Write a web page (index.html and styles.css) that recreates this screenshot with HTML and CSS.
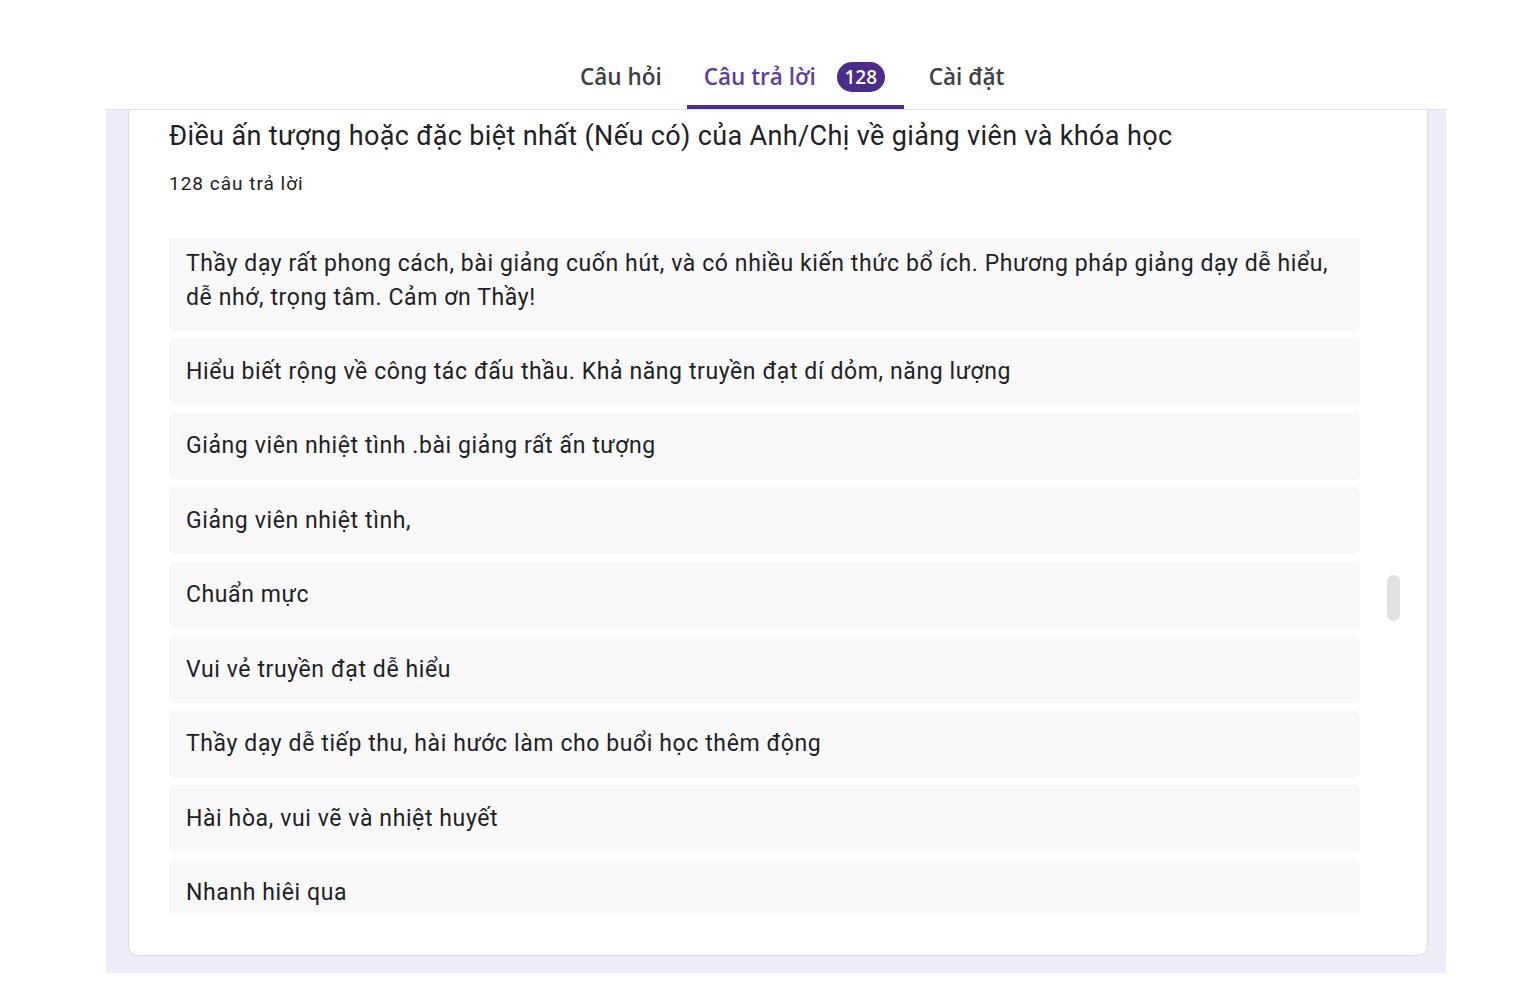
FILE: index.html
```html
<!DOCTYPE html>
<html lang="vi">
<head>
<meta charset="utf-8">
<title>Câu trả lời</title>
<link rel="stylesheet" href="styles.css">
</head>
<body>
<div class="page">
  <header class="tabbar">
    <nav class="tabs">
      <div class="tab">Câu hỏi</div>
      <div class="tab tab-active">Câu trả lời <span class="badge">128</span></div>
      <div class="tab">Cài đặt</div>
    </nav>
  </header>
  <main class="canvas">
    <section class="card">
      <h2 class="q-title">Điều ấn tượng hoặc đặc biệt nhất (Nếu có) của Anh/Chị về giảng viên và khóa học</h2>
      <div class="q-count">128 câu trả lời</div>
      <div class="answers">
        <div class="answers-viewport">
          <div class="answers-list">
            <div class="answer">Thầy dạy rất phong cách, bài giảng cuốn hút, và có nhiều kiến thức bổ ích. Phương pháp giảng dạy dễ hiểu, dễ nhớ, trọng tâm. Cảm ơn Thầy!</div>
            <div class="answer">Hiểu biết rộng về công tác đấu thầu. Khả năng truyền đạt dí dỏm, năng lượng</div>
            <div class="answer">Giảng viên nhiệt tình .bài giảng rất ấn tượng</div>
            <div class="answer">Giảng viên nhiệt tình,</div>
            <div class="answer">Chuẩn mực</div>
            <div class="answer">Vui vẻ truyền đạt dễ hiểu</div>
            <div class="answer">Thầy dạy dễ tiếp thu, hài hước làm cho buổi học thêm động</div>
            <div class="answer">Hài hòa, vui vẽ và nhiệt huyết</div>
            <div class="answer">Nhanh hiêi qua</div>
          </div>
        </div>
        <div class="scroll-track"><div class="scroll-thumb"></div></div>
      </div>
    </section>
  </main>
</div>
</body>
</html>
```

FILE: styles.css
```css
html, body {
  margin: 0;
  padding: 0;
  background: #ffffff;
}
body {
  font-family: Roboto, "Liberation Sans", Arial, sans-serif;
  color: #202124;
}
.page {
  width: 1340px;
  margin-left: 106px;
}
.tabbar {
  height: 109px;
  border-bottom: 1px solid #e0e0e0;
  display: flex;
  align-items: flex-end;
}
.tabs {
  display: flex;
  gap: 8px;
  margin-left: 457px;
}
.tab {
  font-family: "Open Sans", Roboto, sans-serif;
  font-size: 22.5px;
  font-weight: 600;
  color: #3c4043;
  height: 59px;
  padding: 0 17px;
  box-sizing: border-box;
  display: flex;
  align-items: center;
  gap: 21px;
  border-bottom: 4px solid transparent;
  padding-bottom: 2px;
  letter-spacing: 0;
}
.tab-active {
  color: #5e3ea6;
  border-bottom-color: #4b2c8a;
  border-radius: 4px 4px 0 0;
  padding-right: 19px;
}
.badge {
  background: #4b2c8a;
  color: #ffffff;
  font-size: 19px;
  font-weight: 600;
  height: 30px;
  min-width: 48px;
  border-radius: 15px;
  display: inline-flex;
  align-items: center;
  justify-content: center;
  box-sizing: border-box;
  letter-spacing: 0;
}
.canvas {
  background: #efebf8;
  padding: 0 18px 17px 22px;
}
.card {
  background: #ffffff;
  border: 1px solid #dadce0;
  border-top: none;
  border-radius: 0 0 10px 10px;
  padding: 8px 27px 42px 40px;
}
.q-title {
  margin: 0;
  font-size: 27px;
  font-weight: 400;
  line-height: 36px;
  letter-spacing: 0.36px;
  color: #202124;
}
.q-count {
  font-size: 19px;
  line-height: 26px;
  margin-top: 17px;
  letter-spacing: 1px;
  color: #202124;
}
.answers {
  margin-top: 41px;
  display: flex;
  gap: 27px;
  height: 675px;
}
.answers-viewport {
  flex: 0 0 1191px;
  overflow: hidden;
}
.answers-list {
  margin-top: -8px;
  display: flex;
  flex-direction: column;
  gap: 7.45px;
}
.answer {
  background: #f8f8f9;
  border-radius: 5px;
  padding: 16.5px 17px;
  font-size: 23px;
  line-height: 34px;
  letter-spacing: 0.6px;
  color: #202124;
}
.scroll-track {
  width: 14px;
  padding-top: 337px;
}
.scroll-thumb {
  height: 46px;
  border-radius: 7px;
  background: #dfe1e3;
}
```
